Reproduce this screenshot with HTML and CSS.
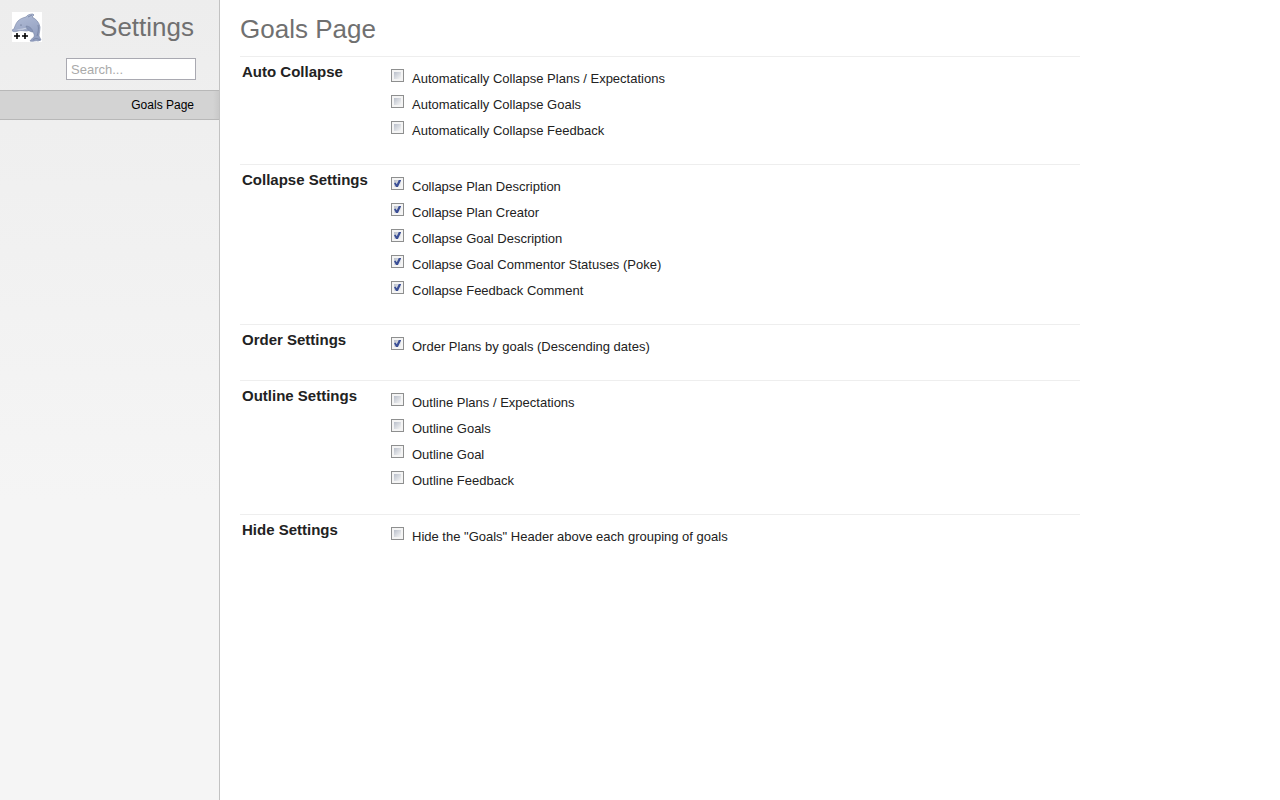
FILE: index.html
```html
<!DOCTYPE html>
<html lang="en">
<head>
<meta charset="utf-8">
<meta name="viewport" content="width=device-width, initial-scale=1">
<title>Settings</title>
<link rel="stylesheet" href="styles.css">
</head>
<body>
<aside class="sidebar">
  <header class="brand">
    <svg class="logo" viewBox="0 0 30 30" aria-hidden="true">
      <defs><linearGradient id="skin" x1="0" y1="0" x2="0.4" y2="1"><stop offset="0" stop-color="#b4bfd8"/><stop offset="1" stop-color="#929fc0"/></linearGradient></defs>
      <path fill="#fff" d="M0 0h30v30H0z"/>
      <path d="M2 17C3 14 4 11 6 9c2-2 4-3 8-4 1-2 4-3 7-3l1 1-2 2c4 2 7 5 8 10 0 4-1 6-1 9l2 4-3 1c-2-1-5 1-8 0 1-2 3-3 4-4 1-3-1-5-3-7l-4 1c-3 0-6-1-9 0-3 1-6 1-6-1z" fill="url(#skin)" stroke="#7e8bab" stroke-width=".7"/>
      <path d="M4 17c4 0 8 0 12-2-3 3-7 3-12 2z" fill="#dce2ee"/>
      <path d="M14 14c3 0 6 2 7 6-3 0-6-2-7-6z" fill="#8996b8" stroke="#75829f" stroke-width=".5"/>
      <path d="M26 13c1 4 0 8-1 11M21 28c2-2 4-2 7 0M16 5l4-2" fill="none" stroke="#75829f" stroke-width=".8"/>
      <circle cx="9" cy="13" r=".6" fill="#4f5a78"/>
      <path d="M2 24h6M5 21v6M10 24h6M13 21v6" stroke="#000" stroke-width="1.6"/>
    </svg>
    <h1 class="title">Settings</h1>
  </header>
  <input class="search" type="search" placeholder="Search..." aria-label="Search">
  <nav><a class="tab" href="#goals">Goals Page</a></nav>
</aside>
<main class="content" id="goals">
  <h2 class="title">Goals Page</h2>
  <section class="group">
    <h3 class="group-name">Auto Collapse</h3>
    <div>
      <label class="option"><input type="checkbox">Automatically Collapse Plans / Expectations</label>
      <label class="option"><input type="checkbox">Automatically Collapse Goals</label>
      <label class="option"><input type="checkbox">Automatically Collapse Feedback</label>
    </div>
  </section>
  <section class="group">
    <h3 class="group-name">Collapse Settings</h3>
    <div>
      <label class="option"><input type="checkbox" checked>Collapse Plan Description</label>
      <label class="option"><input type="checkbox" checked>Collapse Plan Creator</label>
      <label class="option"><input type="checkbox" checked>Collapse Goal Description</label>
      <label class="option"><input type="checkbox" checked>Collapse Goal Commentor Statuses (Poke)</label>
      <label class="option"><input type="checkbox" checked>Collapse Feedback Comment</label>
    </div>
  </section>
  <section class="group">
    <h3 class="group-name">Order Settings</h3>
    <div>
      <label class="option"><input type="checkbox" checked>Order Plans by goals (Descending dates)</label>
    </div>
  </section>
  <section class="group">
    <h3 class="group-name">Outline Settings</h3>
    <div>
      <label class="option"><input type="checkbox">Outline Plans / Expectations</label>
      <label class="option"><input type="checkbox">Outline Goals</label>
      <label class="option"><input type="checkbox">Outline Goal</label>
      <label class="option"><input type="checkbox">Outline Feedback</label>
    </div>
  </section>
  <section class="group">
    <h3 class="group-name">Hide Settings</h3>
    <div>
      <label class="option"><input type="checkbox">Hide the "Goals" Header above each grouping of goals</label>
    </div>
  </section>
</main>
</body>
</html>
```
FILE: styles.css
```css
* { box-sizing: border-box; }
body {
  margin: 0;
  min-height: 100vh;
  display: flex;
  background: #fff;
  color: #222;
  font: 13px/26px "Liberation Sans", Arial, sans-serif;
}
.sidebar {
  flex: 0 0 220px;
  display: flex;
  flex-direction: column;
  background: linear-gradient(#ededed, #f5f5f5 500px);
  border-right: 1px solid #c2c2c2;
}
.brand {
  display: flex;
  justify-content: space-between;
  padding: 12px 25px 0 12px;
}
.logo { width: 30px; height: 30px; }
.title {
  margin: 0;
  color: #707070;
  font-size: 26px;
  font-weight: normal;
  line-height: 30px;
}
.search {
  appearance: none;
  align-self: flex-end;
  width: 130px;
  height: 22px;
  margin: 16px 23px 10px 0;
  padding: 1px 4px 0;
  border: 1px solid #a9a9b1;
  border-radius: 0;
  background: #fff;
  font: inherit;
}
.search::placeholder { color: #aaa; }
.tab {
  display: block;
  padding: 0 25px 0 0;
  border: solid #b8b8b8;
  border-width: 1px 0;
  background: linear-gradient(to right, #d3d3d3 213px, #c9c9c9);
  color: #000;
  font-size: 12px;
  line-height: 28px;
  text-align: right;
  text-decoration: none;
}
.content {
  flex: 0 1 880px;
  padding: 14px 20px;
}
.content > .title { margin-bottom: 12px; }
.group {
  display: grid;
  grid-template-columns: 149px 1fr;
  padding: 7px 0 20px 2px;
  border-top: 1px solid #eee;
}
.group > div { padding-top: 2px; }
.group-name {
  margin: 0;
  font-size: 15px;
  line-height: 16px;
}
.option {
  display: flex;
  align-items: flex-start;
  gap: 8px;
}
.option input {
  appearance: none;
  flex: none;
  width: 13px;
  height: 13px;
  margin: 3px 0 0;
  border: 1px solid #8e8f8f;
  background: linear-gradient(135deg, #b9bfca, #f6f6f6) content-box, #f4f4f4;
  padding: 2px;
}
.option input:checked::before {
  content: "";
  display: block;
  width: 7px;
  height: 7px;
  background: #3b4f96;
  clip-path: polygon(0 45%, 20% 35%, 40% 60%, 75% -15%, 110% -15%, 55% 105%, 30% 105%);
}
```
